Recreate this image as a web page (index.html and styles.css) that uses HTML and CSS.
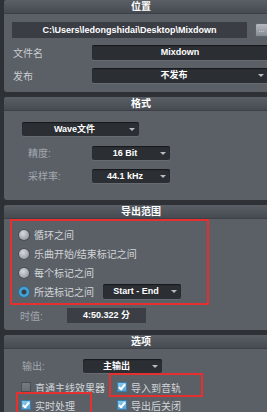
FILE: index.html
```html
<!DOCTYPE html>
<html lang="zh-CN">
<head>
    <meta charset="UTF-8">
    <meta name="viewport" content="width=device-width, initial-scale=1.0">
    <title>导出混音</title>
    <link rel="stylesheet" href="styles.css">
</head>
<body>
    <div class="dialog">
        <!-- 位置 -->
        <section class="panel">
            <div class="panel-head">位置</div>
            <div class="panel-body body-location">
                <div class="path-row">
                    <div class="path">C:\Users\ledongshidai\Desktop\Mixdown</div>
                    <button class="browse">...</button>
                </div>
                <div class="form-row">
                    <span class="label">文件名</span>
                    <div class="field">Mixdown</div>
                </div>
                <div class="form-row">
                    <span class="label">发布</span>
                    <div class="field select">不发布</div>
                </div>
            </div>
        </section>

        <!-- 格式 -->
        <section class="panel">
            <div class="panel-head">格式</div>
            <div class="panel-body body-format">
                <div class="field select wide">Wave文件</div>
                <div class="form-row sub">
                    <span class="label dim">精度:</span>
                    <div class="field select short">16 Bit</div>
                </div>
                <div class="form-row sub">
                    <span class="label dim">采样率:</span>
                    <div class="field select short">44.1 kHz</div>
                </div>
            </div>
        </section>

        <!-- 导出范围 -->
        <section class="panel">
            <div class="panel-head">导出范围</div>
            <div class="panel-body body-range">
                <div class="range-box">
                    <div class="radio-row"><span class="radio"></span>循环之间</div>
                    <div class="radio-row"><span class="radio"></span>乐曲开始/结束标记之间</div>
                    <div class="radio-row"><span class="radio"></span>每个标记之间</div>
                    <div class="radio-row">
                        <span class="radio on"></span>所选标记之间
                        <div class="field select marker">Start - End</div>
                    </div>
                </div>
                <div class="time-row">
                    <span class="label dim">时值:</span>
                    <div class="field time">4:50.322 分</div>
                </div>
            </div>
        </section>

        <!-- 选项 -->
        <section class="panel">
            <div class="panel-head">选项</div>
            <div class="panel-body body-options">
                <div class="out-row">
                    <span class="label dim">输出:</span>
                    <div class="field select output">主输出</div>
                </div>
                <div class="check-grid">
                    <div class="check"><span class="box"></span>直通主线效果器</div>
                    <div class="check hl hl-import"><span class="box on"></span>导入到音轨</div>
                    <div class="check hl hl-live"><span class="box on"></span>实时处理</div>
                    <div class="check"><span class="box on"></span>导出后关闭</div>
                </div>
            </div>
        </section>
    </div>
</body>
</html>
```

FILE: styles.css
```css
html, body {
    margin: 0;
    padding: 0;
}

body {
    background-color: #2e3237;
    font-family: "Liberation Sans", "Noto Sans CJK SC", sans-serif;
    font-size: 10px;
    color: #c9ccd0;
    overflow: hidden;
    width: 267px;
    height: 412px;
}

.dialog {
    width: 274px;
    padding-left: 4px;
}

.panel {
    background-color: #5b6067;
    border-radius: 3px 0 0 3px;
    margin-bottom: 5px;
    overflow: hidden;
}

.panel-head {
    height: 14px;
    line-height: 14px;
    text-align: center;
    font-weight: bold;
    color: #fff;
    background: linear-gradient(#5a5f66, #464a51);
    border-bottom: 1px solid #3d4147;
    box-sizing: border-box;
}

.panel-body {
    padding: 0 10px 0 0;
}

/* 通用输入框 */
.field {
    background-color: #2b2e33;
    color: #fff;
    font-weight: bold;
    font-size: 9px;
    text-align: center;
    height: 15px;
    line-height: 15px;
    border-radius: 2px;
    box-shadow: inset 0 1px 1px rgba(0, 0, 0, 0.5), 0 1px 0 rgba(255, 255, 255, 0.08);
    position: relative;
    box-sizing: border-box;
    white-space: nowrap;
}

.select {
    padding-right: 12px;
}

.select::after {
    content: "";
    position: absolute;
    right: 4px;
    top: 6px;
    border-left: 3px solid transparent;
    border-right: 3px solid transparent;
    border-top: 3px solid #b8bcc2;
}

.label {
    color: #c9ccd0;
}

.label.dim {
    color: #a2a7ae;
}

/* 位置 */
.body-location {
    padding-top: 8px;
    padding-bottom: 9px;
}

.path-row {
    display: flex;
    align-items: center;
    gap: 8px;
    padding-left: 8px;
    margin-bottom: 7px;
}

.path {
    width: 235px;
    flex: none;
    height: 16px;
    line-height: 16px;
    background-color: #3a3e44;
    color: #fff;
    font-weight: bold;
    font-size: 9px;
    text-align: center;
    white-space: nowrap;
}

.browse {
    flex: none;
    width: 12px;
    height: 14px;
    padding: 0;
    border: 1px solid #5f646b;
    border-right: none;
    border-radius: 2px 0 0 2px;
    background: linear-gradient(#b5b9bf, #868b92);
    color: #e6e8ea;
    font-size: 7px;
    line-height: 12px;
    overflow: hidden;
}

.form-row {
    display: grid;
    grid-template-columns: 79px 176px;
    align-items: center;
    padding-left: 9px;
}

.form-row + .form-row {
    margin-top: 8px;
}

/* 格式 */
.body-format {
    padding-top: 11px;
    padding-bottom: 17px;
}

.field.wide {
    width: 117px;
    margin-left: 18px;
    height: 14px;
    line-height: 14px;
}

.form-row.sub {
    grid-template-columns: 64px 78px;
    padding-left: 24px;
}

.body-format .wide + .form-row.sub {
    margin-top: 9px;
}

.form-row.sub + .form-row.sub {
    margin-top: 8px;
}

.field.short {
    height: 14px;
    line-height: 14px;
}

/* 导出范围 */
.body-range {
    padding-bottom: 7px;
}

.range-box {
    width: 199px;
    margin-left: 6px;
    border: 2px solid #e5302f;
    box-sizing: border-box;
    padding: 4px 0 2px 7px;
}

.radio-row {
    display: flex;
    align-items: center;
    height: 19px;
    color: #d2d5d8;
}

.radio {
    width: 10px;
    height: 10px;
    border-radius: 50%;
    margin-right: 5px;
    background: radial-gradient(circle at 40% 35%, #d6d9dc, #9da1a7 70%);
    box-shadow: 0 0 0 1px #4a4e54;
    flex: none;
}

.radio.on {
    background: radial-gradient(circle, #3b4048 0 2px, #3fa3dc 3px);
    box-shadow: 0 0 0 1px #2c6f99;
}

.field.marker {
    width: 78px;
    margin-left: 9px;
    height: 15px;
    line-height: 15px;
}

.time-row {
    display: flex;
    align-items: center;
    padding-left: 16px;
    margin-top: 3px;
}

.time-row .label {
    width: 47px;
}

.field.time {
    width: 79px;
    background-color: #3b3f45;
    box-shadow: none;
    border-radius: 0;
}

/* 选项 */
.body-options {
    padding-top: 9px;
    padding-bottom: 4px;
}

.out-row {
    display: flex;
    align-items: center;
    padding-left: 18px;
}

.out-row .label {
    width: 61px;
}

.field.output {
    width: 79px;
    height: 14px;
    line-height: 14px;
}

.check-grid {
    display: grid;
    grid-template-columns: 96px 96px;
    row-gap: 6px;
    padding-left: 17px;
    margin-top: 8px;
}

.check {
    display: flex;
    align-items: center;
    height: 12px;
    color: #d2d5d8;
    position: relative;
    white-space: nowrap;
}

.box {
    width: 10px;
    height: 10px;
    margin-right: 4px;
    flex: none;
    background: linear-gradient(#767b82, #686c73);
    border: 1px solid #4a4e54;
    box-sizing: border-box;
    position: relative;
}

.box.on {
    background: linear-gradient(#86c8ee, #559fd0);
    border-color: #3a7eaa;
}

.box.on::after {
    content: "";
    position: absolute;
    left: 2px;
    top: 0;
    width: 2px;
    height: 5px;
    border: solid #fff;
    border-width: 0 2px 2px 0;
    transform: rotate(40deg);
}

/* 红色标注框 */
.hl::after {
    content: "";
    position: absolute;
    border: 2px solid #e5302f;
}

.hl-import::after {
    top: -8px;
    left: -8px;
    right: 10px;
    bottom: -4px;
}

.hl-live::after {
    top: -7px;
    left: -5px;
    right: 25px;
    bottom: -12px;
}
```
